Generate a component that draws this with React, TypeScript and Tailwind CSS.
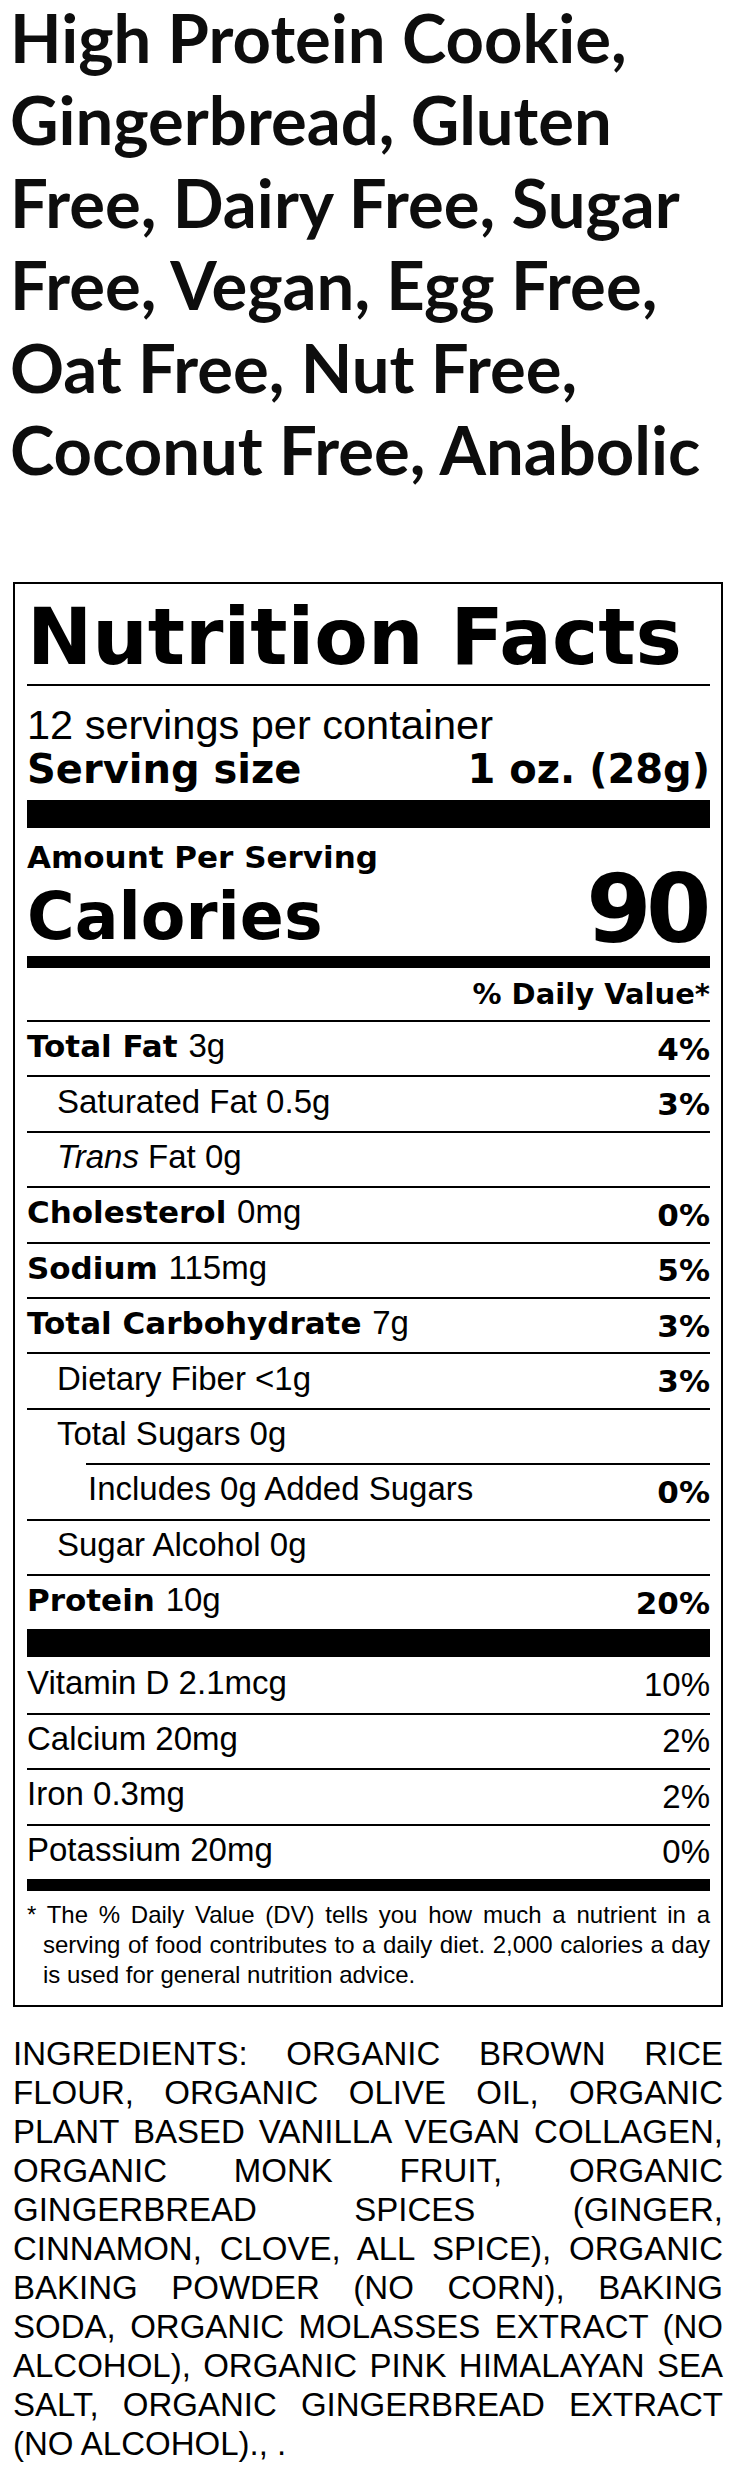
import React from "react";

const HEAVY = "[font-family:'DejaVu_Sans',sans-serif] font-bold";
const ARIAL = "[font-family:'Liberation_Sans',Arial,sans-serif]";

type RowProps = {
  label?: string;
  italic?: string;
  amount: string;
  pct?: string;
  indent?: 0 | 1 | 2;
  top?: boolean;
  vitamin?: boolean;
};

function Row({ label, italic, amount, pct, indent = 0, top = true, vitamin = false }: RowProps) {
  const rowCls =
    indent === 2
      ? "ml-[59px] pl-[2px]"
      : indent === 1
      ? "pl-[30px]"
      : "";
  return (
    <div
      className={`flex h-[55.4px] items-center justify-between leading-[36px] ${
        top ? "border-t-2 border-black" : ""
      } ${rowCls}`}
    >
      <div className="whitespace-nowrap">
        {label && <span className={`${HEAVY} text-[31px]`}>{label} </span>}
        {italic && <span className={`${ARIAL} text-[33px] italic`}>{italic} </span>}
        <span className={`${ARIAL} text-[33px]`}>{amount}</span>
      </div>
      {pct && (
        <div className={vitamin ? `${ARIAL} text-[33px]` : `${HEAVY} text-[31px]`}>{pct}</div>
      )}
    </div>
  );
}

const ingredientLines = [
  "INGREDIENTS: ORGANIC BROWN RICE",
  "FLOUR, ORGANIC OLIVE OIL, ORGANIC",
  "PLANT BASED VANILLA VEGAN COLLAGEN,",
  "ORGANIC MONK FRUIT, ORGANIC",
  "GINGERBREAD SPICES (GINGER,",
  "CINNAMON, CLOVE, ALL SPICE), ORGANIC",
  "BAKING POWDER (NO CORN), BAKING",
  "SODA, ORGANIC MOLASSES EXTRACT (NO",
  "ALCOHOL), ORGANIC PINK HIMALAYAN SEA",
  "SALT, ORGANIC GINGERBREAD EXTRACT",
];

export default function App() {
  return (
    <div className="w-[736px] bg-white pb-[22px] text-black">
      {/* Product title */}
      <h1 className="mt-[-4px] pl-[10px] pr-[6px] [font-family:Lato,sans-serif] text-[67px] font-bold leading-[82.4px] text-[#0d0d0d]">
        High Protein Cookie,
        <br />
        Gingerbread, Gluten
        <br />
        Free, Dairy Free, Sugar
        <br />
        Free, Vegan, Egg Free,
        <br />
        Oat Free, Nut Free,
        <br />
        Coconut Free, Anabolic
      </h1>

      {/* Nutrition facts panel */}
      <div className="mx-[13px] mt-[91.6px] border-2 border-black pl-[12px] pr-[11px] pb-[15px] pt-[14px]">
        <div className={`${HEAVY} text-[78px] leading-[78px] whitespace-nowrap`}>Nutrition Facts</div>
        <div className="mt-[8px] h-[2px] bg-black" />

        <div className={`${ARIAL} mt-[17px] text-[41.5px] leading-[44px]`}>12 servings per container</div>
        <div className={`${HEAVY} flex justify-between text-[40px] leading-[44px]`}>
          <span>Serving size</span>
          <span>1 oz. (28g)</span>
        </div>
        <div className="mt-[9px] h-[28px] bg-black" />

        <div className="mt-[11px] flex h-[117px] items-start justify-between">
          <div>
            <div className={`${HEAVY} text-[31px] leading-[36px]`}>Amount Per Serving</div>
            <div className={`${HEAVY} mt-[9px] text-[65px] leading-[65px]`}>Calories</div>
          </div>
          <div className={`${HEAVY} mr-[4px] mt-[24px] text-[94px] leading-[94px] tracking-[-5.5px]`}>90</div>
        </div>
        <div className="h-[12px] bg-black" />

        <div className={`${HEAVY} flex h-[52px] items-center justify-end text-[29px] leading-[32px]`}>
          % Daily Value*
        </div>

        <Row label="Total Fat" amount="3g" pct="4%" />
        <Row indent={1} amount="Saturated Fat 0.5g" pct="3%" />
        <Row indent={1} italic="Trans" amount="Fat 0g" />
        <Row label="Cholesterol" amount="0mg" pct="0%" />
        <Row label="Sodium" amount="115mg" pct="5%" />
        <Row label="Total Carbohydrate" amount="7g" pct="3%" />
        <Row indent={1} amount="Dietary Fiber <1g" pct="3%" />
        <Row indent={1} amount="Total Sugars 0g" />
        <Row indent={2} amount="Includes 0g Added Sugars" pct="0%" />
        <Row indent={1} amount="Sugar Alcohol 0g" />
        <Row label="Protein" amount="10g" pct="20%" />

        <div className="h-[28px] bg-black" />

        <Row top={false} vitamin amount="Vitamin D 2.1mcg" pct="10%" />
        <Row vitamin amount="Calcium 20mg" pct="2%" />
        <Row vitamin amount="Iron 0.3mg" pct="2%" />
        <Row vitamin amount="Potassium 20mg" pct="0%" />

        <div className="h-[12px] bg-black" />

        <div className={`${ARIAL} pt-[9px] text-[24px] leading-[30px]`}>
          <div className="text-justify [text-align-last:justify]">
            * The % Daily Value (DV) tells you how much a nutrient in a
          </div>
          <div className="pl-[16px] text-justify [text-align-last:justify]">
            serving of food contributes to a daily diet. 2,000 calories a day
          </div>
          <div className="pl-[16px]">is used for general nutrition advice.</div>
        </div>
      </div>

      {/* Ingredients */}
      <div className={`${ARIAL} mt-[27px] px-[13px] text-[33px] leading-[39px]`}>
        {ingredientLines.map((l, i) => (
          <div key={i} className="whitespace-nowrap text-justify [text-align-last:justify]">
            {l}
          </div>
        ))}
        <div>(NO ALCOHOL)., .</div>
      </div>
    </div>
  );
}
